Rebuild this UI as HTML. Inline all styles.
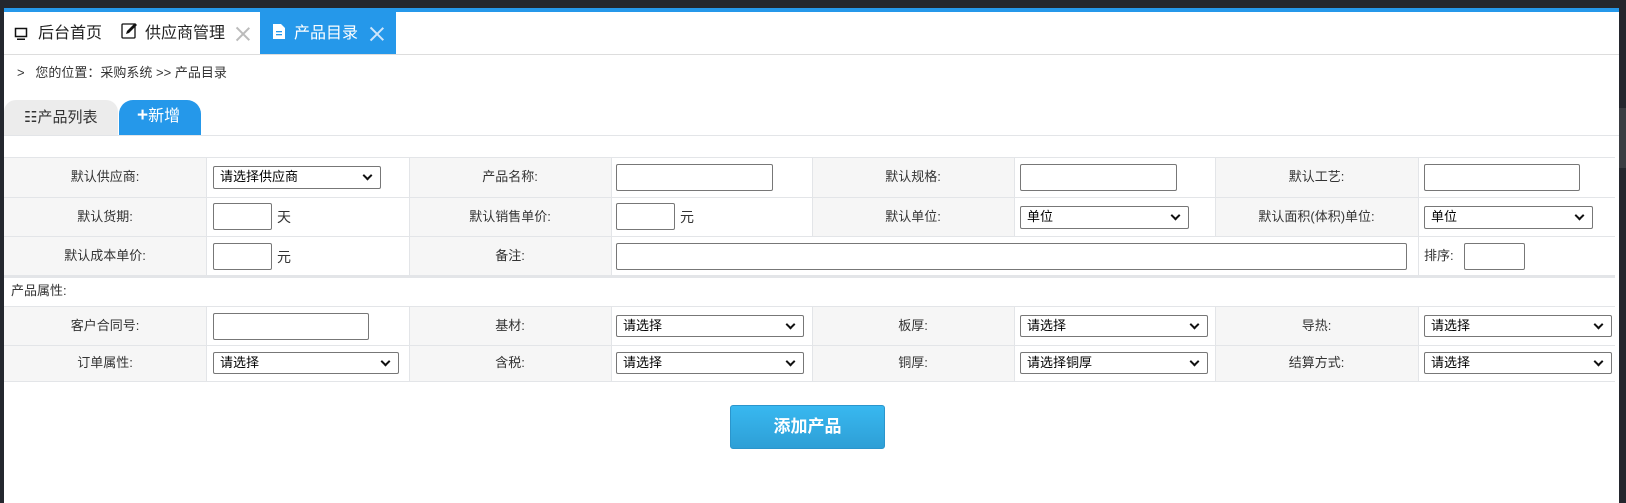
<!DOCTYPE html>
<html><head><meta charset="utf-8"><style>
*{margin:0;padding:0;box-sizing:border-box}
body{width:1626px;height:503px;background:#24272e;position:relative;overflow:hidden;font-family:"Liberation Sans","Noto Sans CJK SC",sans-serif;color:#333}
.abs{position:absolute}
#page{left:4px;top:8px;width:1615px;height:495px;background:#fff;position:absolute}
.t{position:absolute;font-size:16px;color:#222;white-space:nowrap;line-height:20px}
.lbl{position:absolute;font-size:13px;color:#333;text-align:center;white-space:nowrap;line-height:16px}
.cellL{position:absolute;background:#f6f6f6}
.in{position:absolute;border:1px solid #777;border-radius:2px;background:#fff}
.sel{position:absolute;border:1px solid #777;border-radius:2px;background:#fff;font-size:13px;color:#000;padding-left:6px;line-height:20px}
.sel:after{content:"";position:absolute;right:9px;top:5px;width:5px;height:5px;border-right:2px solid #111;border-bottom:2px solid #111;transform:rotate(45deg)}
.hl{position:absolute;left:4px;width:1611px;height:1px;background:#e3e5e8}
.vl{position:absolute;width:1px;background:#e3e5e8}
.x{position:absolute;width:14px;height:14px}
.x:before,.x:after{content:"";position:absolute;left:6px;top:-2px;width:1.5px;height:18px;background:currentColor;transform:rotate(45deg)}
.x:after{transform:rotate(-45deg)}
</style></head><body>
<div id="page"></div>
<div class="abs" style="left:4px;top:8px;width:1615px;height:4px;background:#2598ea"></div>
<div class="abs" style="left:1619px;top:108px;width:7px;height:60px;background:#3a3d42"></div>
<div class="abs" style="left:4px;top:54px;width:1615px;height:1px;background:#ddd"></div>
<!-- tabs -->
<svg class="abs" style="left:14px;top:27px" width="14" height="14" viewBox="0 0 14 14"><rect x="1.5" y="1.5" width="11" height="8" fill="none" stroke="#111" stroke-width="1.5"/><rect x="3" y="11.5" width="8" height="1.5" fill="#111"/></svg>
<div class="t" style="left:38px;top:24px">后台首页</div>
<svg class="abs" style="left:121px;top:22px" width="17" height="17" viewBox="0 0 17 17"><rect x="1" y="2" width="13" height="14" rx="1" fill="none" stroke="#111" stroke-width="1.3"/><path d="M5 12 L6 9 L14 1 L16 3 L8 11 Z" fill="#111"/></svg>
<div class="t" style="left:145px;top:24px">供应商管理</div>
<div class="x" style="left:236px;top:27px;color:#bbb"></div>
<div class="abs" style="left:260px;top:12px;width:136px;height:42px;background:#2598ea"></div>
<svg class="abs" style="left:273px;top:24px" width="12" height="15" viewBox="0 0 12 15"><path d="M0 0H8L12 4V15H0Z" fill="#fff"/><rect x="3" y="7" width="6" height="1.3" fill="#2598ea"/><rect x="3" y="10" width="6" height="1.3" fill="#2598ea"/></svg>
<div class="t" style="left:294px;top:24px;color:#fff">产品目录</div>
<div class="x" style="left:370px;top:27px;color:#cfe6fb"></div>
<!-- breadcrumb -->
<div class="t" style="left:17px;top:65px;font-size:13px;color:#333;line-height:16px">&gt;&nbsp;&nbsp;&nbsp;您的位置：采购系统 &gt;&gt; 产品目录</div>
<!-- sub tabs -->
<div class="abs" style="left:4px;top:100px;width:114px;height:35px;background:#ececec;border-radius:12px 12px 0 0"></div>
<div class="t" style="left:24px;top:108px;font-size:15px;color:#333">☷产品列表</div>
<div class="abs" style="left:119px;top:100px;width:82px;height:35px;background:#2598ea;border-radius:14px 14px 0 0"></div>
<div class="t" style="left:137px;top:107px;font-size:16px;color:#fff"><b style="font-size:19px;line-height:16px">+</b>新增</div>
<div class="abs" style="left:4px;top:135px;width:1615px;height:1px;background:#e3e5e8"></div>
<!-- table label bg -->
<div class="cellL" style="left:4px;top:157px;width:202px;height:118px"></div>
<div class="cellL" style="left:409px;top:157px;width:202px;height:118px"></div>
<div class="cellL" style="left:812px;top:157px;width:202px;height:79px"></div>
<div class="cellL" style="left:1215px;top:157px;width:203px;height:79px"></div>
<div class="cellL" style="left:4px;top:306px;width:202px;height:75px"></div>
<div class="cellL" style="left:409px;top:306px;width:202px;height:75px"></div>
<div class="cellL" style="left:812px;top:306px;width:202px;height:75px"></div>
<div class="cellL" style="left:1215px;top:306px;width:203px;height:75px"></div>
<div class="hl" style="top:157px"></div><div class="hl" style="top:197px"></div><div class="hl" style="top:236px"></div>
<div class="hl" style="top:275px;height:3px"></div><div class="hl" style="top:306px"></div><div class="hl" style="top:345px"></div><div class="hl" style="top:381px"></div>
<div class="vl" style="left:206px;top:157px;height:118px"></div><div class="vl" style="left:409px;top:157px;height:118px"></div><div class="vl" style="left:611px;top:157px;height:118px"></div>
<div class="vl" style="left:812px;top:157px;height:79px"></div><div class="vl" style="left:1014px;top:157px;height:79px"></div><div class="vl" style="left:1215px;top:157px;height:79px"></div><div class="vl" style="left:1418px;top:157px;height:118px"></div>
<div class="vl" style="left:206px;top:306px;height:75px"></div><div class="vl" style="left:409px;top:306px;height:75px"></div><div class="vl" style="left:611px;top:306px;height:75px"></div><div class="vl" style="left:812px;top:306px;height:75px"></div><div class="vl" style="left:1014px;top:306px;height:75px"></div><div class="vl" style="left:1215px;top:306px;height:75px"></div><div class="vl" style="left:1418px;top:306px;height:75px"></div>
<!-- labels -->
<div class="lbl" style="left:4px;width:202px;top:169px">默认供应商:</div>
<div class="lbl" style="left:409px;width:202px;top:169px">产品名称:</div>
<div class="lbl" style="left:812px;width:202px;top:169px">默认规格:</div>
<div class="lbl" style="left:1215px;width:203px;top:169px">默认工艺:</div>
<div class="lbl" style="left:4px;width:202px;top:209px">默认货期:</div>
<div class="lbl" style="left:409px;width:202px;top:209px">默认销售单价:</div>
<div class="lbl" style="left:812px;width:202px;top:209px">默认单位:</div>
<div class="lbl" style="left:1215px;width:203px;top:209px">默认面积(体积)单位:</div>
<div class="lbl" style="left:4px;width:202px;top:248px">默认成本单价:</div>
<div class="lbl" style="left:409px;width:202px;top:248px">备注:</div>
<div class="lbl" style="left:1424px;top:248px">排序:</div>
<div class="lbl" style="left:11px;top:283px">产品属性:</div>
<div class="lbl" style="left:4px;width:202px;top:318px">客户合同号:</div>
<div class="lbl" style="left:409px;width:202px;top:318px">基材:</div>
<div class="lbl" style="left:812px;width:202px;top:318px">板厚:</div>
<div class="lbl" style="left:1215px;width:203px;top:318px">导热:</div>
<div class="lbl" style="left:4px;width:202px;top:355px">订单属性:</div>
<div class="lbl" style="left:409px;width:202px;top:355px">含税:</div>
<div class="lbl" style="left:812px;width:202px;top:355px">铜厚:</div>
<div class="lbl" style="left:1215px;width:203px;top:355px">结算方式:</div>
<!-- inputs -->
<div class="sel" style="left:213px;top:166px;width:168px;height:23px">请选择供应商</div>
<div class="in" style="left:616px;top:164px;width:157px;height:27px"></div>
<div class="in" style="left:1020px;top:164px;width:157px;height:27px"></div>
<div class="in" style="left:1424px;top:164px;width:156px;height:27px"></div>
<div class="in" style="left:213px;top:203px;width:59px;height:27px"></div><div class="lbl" style="left:277px;top:209px;font-size:14px">天</div>
<div class="in" style="left:616px;top:203px;width:59px;height:27px"></div><div class="lbl" style="left:680px;top:209px;font-size:14px">元</div>
<div class="sel" style="left:1020px;top:206px;width:169px;height:23px">单位</div>
<div class="sel" style="left:1424px;top:206px;width:169px;height:23px">单位</div>
<div class="in" style="left:213px;top:243px;width:59px;height:27px"></div><div class="lbl" style="left:277px;top:249px;font-size:14px">元</div>
<div class="in" style="left:616px;top:243px;width:791px;height:27px"></div>
<div class="in" style="left:1464px;top:243px;width:61px;height:27px"></div>
<div class="in" style="left:213px;top:313px;width:156px;height:27px"></div>
<div class="sel" style="left:616px;top:315px;width:188px;height:22px">请选择</div>
<div class="sel" style="left:1020px;top:315px;width:188px;height:22px">请选择</div>
<div class="sel" style="left:1424px;top:315px;width:188px;height:22px">请选择</div>
<div class="sel" style="left:213px;top:352px;width:186px;height:22px">请选择</div>
<div class="sel" style="left:616px;top:352px;width:188px;height:22px">请选择</div>
<div class="sel" style="left:1020px;top:352px;width:188px;height:22px">请选择铜厚</div>
<div class="sel" style="left:1424px;top:352px;width:188px;height:22px">请选择</div>
<!-- button -->
<div class="abs" style="left:730px;top:405px;width:155px;height:44px;border-radius:3px;background:linear-gradient(#38b8f0,#2e9fd6);border:1px solid #2b95cc;color:#fff;font-weight:bold;font-size:17px;text-align:center;line-height:42px">添加产品</div>
</body></html>
